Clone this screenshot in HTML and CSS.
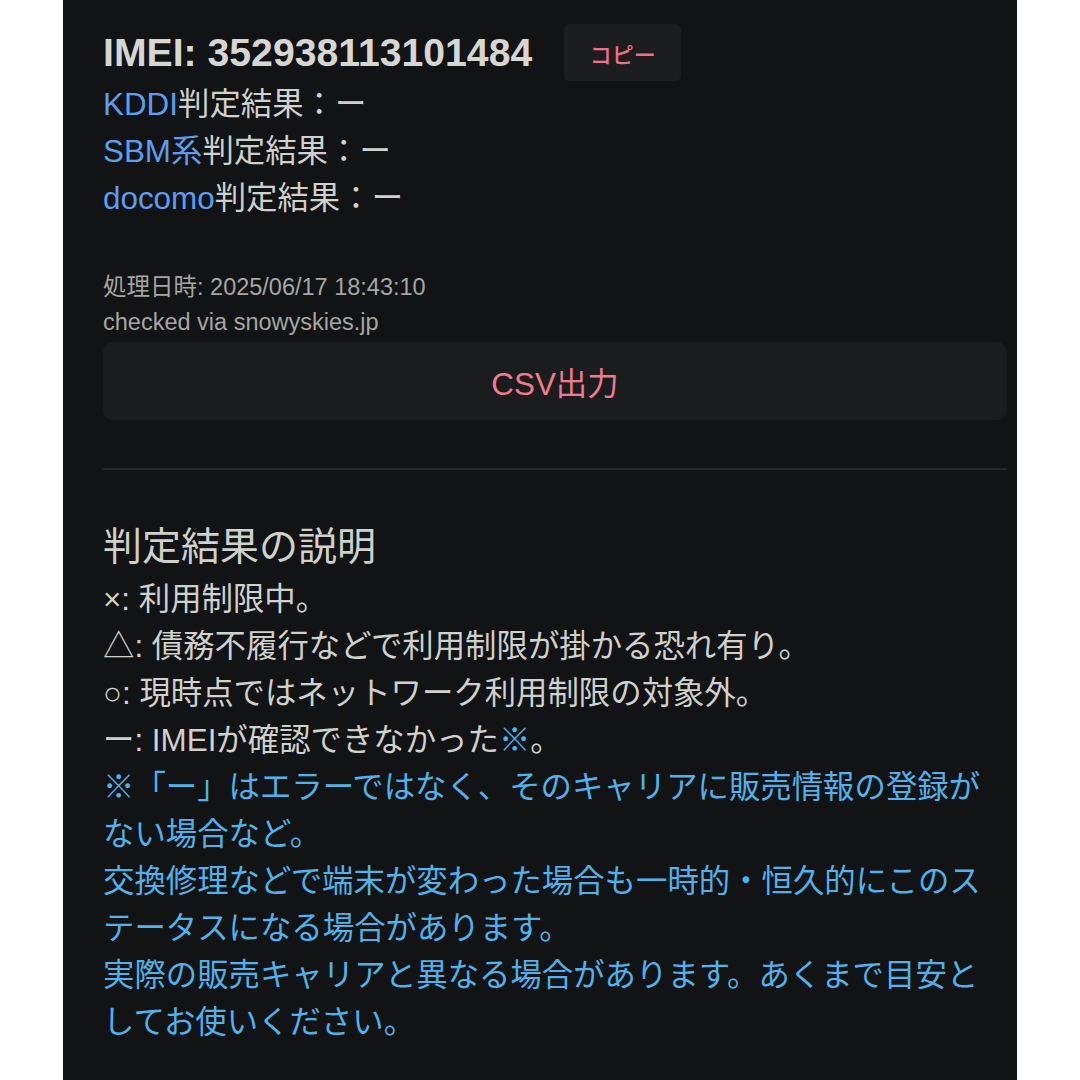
FILE: index.html
```html
<!DOCTYPE html>
<html lang="ja">
<head>
<meta charset="utf-8">
<title>IMEI判定結果</title>
<link rel="stylesheet" href="styles.css">
</head>
<body>
<main class="panel">
  <div class="imei-row">
    <h1 class="imei">IMEI: 352938113101484</h1>
    <button class="copy-btn">コピー</button>
  </div>
  <div class="results">
    <div class="line"><span class="carrier">KDDI</span>判定結果：ー</div>
    <div class="line"><span class="carrier">SBM系</span>判定結果：ー</div>
    <div class="line"><span class="carrier">docomo</span>判定結果：ー</div>
  </div>
  <div class="meta">
    <div class="meta-line">処理日時: 2025/06/17 18:43:10</div>
    <div class="meta-line">checked via snowyskies.jp</div>
  </div>
  <button class="csv-btn">CSV出力</button>
  <hr class="divider">
  <section class="legend">
    <h2 class="legend-title">判定結果の説明</h2>
    <div class="line">×: 利用制限中。</div>
    <div class="line">△: 債務不履行などで利用制限が掛かる恐れ有り。</div>
    <div class="line">○: 現時点ではネットワーク利用制限の対象外。</div>
    <div class="line">ー: IMEIが確認できなかった<span class="note-mark">※</span>。</div>
    <p class="note">※「ー」はエラーではなく、そのキャリアに販売情報の登録がない場合など。<br>交換修理などで端末が変わった場合も一時的・恒久的にこのステータスになる場合があります。<br>実際の販売キャリアと異なる場合があります。あくまで目安としてお使いください。</p>
  </section>
</main>
</body>
</html>
```

FILE: styles.css
```css
html, body {
  margin: 0;
  padding: 0;
  background: #ffffff;
}

body {
  font-family: "Liberation Sans", "Noto Sans CJK JP", sans-serif;
  font-size: 31.4px;
  line-height: 47px;
  color: #d0d0cc;
}

.panel {
  box-sizing: border-box;
  width: 954px;
  min-height: 1080px;
  margin-left: 63px;
  padding: 24px 10px 0 40px;
  background: #111315;
}

.imei-row {
  display: flex;
  align-items: center;
  height: 57px;
}

.imei {
  margin: 0;
  font-size: 39.2px;
  font-weight: bold;
  line-height: 57px;
  color: #d6d6d2;
}

.copy-btn {
  margin-left: 32px;
  width: 117px;
  height: 57px;
  border: none;
  border-radius: 6px;
  background: #1c1d1f;
  color: #ee6f8c;
  font-family: "Noto Sans CJK JP", sans-serif;
  font-size: 22px;
  font-weight: 500;
  padding: 0;
}

.carrier {
  color: #5d9ef0;
}

.meta {
  margin-top: 48px;
  font-size: 23.5px;
  line-height: 35px;
  color: #a6a6a2;
}

.csv-btn {
  display: block;
  width: 100%;
  height: 78px;
  margin-top: 2px;
  border: none;
  border-radius: 10px;
  background: #1b1c1d;
  color: #f07a90;
  font-family: "Liberation Sans", "Noto Sans CJK JP", sans-serif;
  font-size: 31.4px;
  padding: 0;
}

.divider {
  margin: 48px 0 0 0;
  border: none;
  height: 2px;
  background: #25272a;
}

.legend-title {
  margin: 48px 0 0 0;
  font-size: 39px;
  font-weight: normal;
  line-height: 58px;
  color: #d0d0cc;
}

.note-mark {
  color: #4fb2ea;
}

.note {
  margin: 0;
  color: #4fb2ea;
}
```
